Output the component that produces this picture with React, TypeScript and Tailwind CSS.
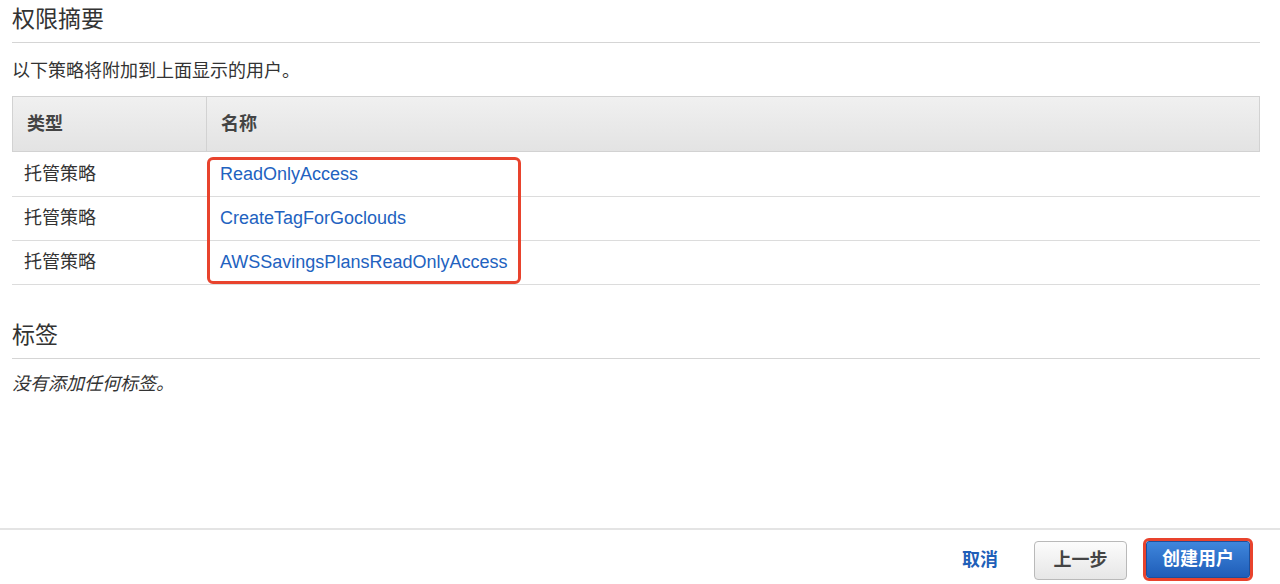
import React from "react";

const cjk = '"Liberation Sans", "Noto Sans CJK SC", sans-serif';

const rows = [
  { type: "托管策略", name: "ReadOnlyAccess", h: "h-[45px]" },
  { type: "托管策略", name: "CreateTagForGoclouds", h: "h-[44px]" },
  { type: "托管策略", name: "AWSSavingsPlansReadOnlyAccess", h: "h-[44px]" },
];

export default function App() {
  return (
    <div
      className="flex h-[584px] w-[1280px] flex-col bg-white text-[#333]"
      style={{ fontFamily: cjk }}
    >
      <div className="flex-1 pl-[12px] pr-[20px]">
        <h2 className="border-b border-[#d5d5d5] pb-[4px] text-[23px] font-normal leading-[38px] text-[#333]">
          权限摘要
        </h2>
        <p className="mt-[16px] text-[18px] leading-[24px]">以下策略将附加到上面显示的用户。</p>

        <div className="relative mt-[13px]">
          <div className="flex h-[56px] border border-[#d2d2d2] bg-gradient-to-b from-[#f0f0f0] to-[#e3e3e3] text-[18px] font-bold text-[#444]">
            <div className="flex w-[194px] items-center border-r border-[#d2d2d2] pl-[14px]">类型</div>
            <div className="flex flex-1 items-center pl-[14px]">名称</div>
          </div>
          {rows.map((r) => (
            <div
              key={r.name}
              className={`flex ${r.h} items-center border-b border-[#dcdcdc] text-[18px]`}
            >
              <div className="w-[195px] pl-[12px] text-[#333]">{r.type}</div>
              <div className="flex-1 pl-[13px] text-[#2262c0]">{r.name}</div>
            </div>
          ))}
          <div className="pointer-events-none absolute left-[195px] top-[61px] h-[127px] w-[314px] rounded-[6px] border-[3px] border-[#e8432d]" />
        </div>

        <h2 className="mt-[31px] border-b border-[#d5d5d5] pb-[4px] text-[23px] font-normal leading-[38px] text-[#333]">
          标签
        </h2>
        <p className="mt-[13px] text-[18px] italic leading-[24px]">没有添加任何标签。</p>
      </div>

      <div className="flex h-[56px] items-start justify-end border-t-2 border-[#e4e4e4] pr-[27px] pt-[8px]">
        <div className="flex items-center">
          <button className="mt-[1px] text-[18px] font-bold text-[#1f5fb8]">取消</button>
          <button className="ml-[36px] mt-[2px] h-[39px] w-[93px] rounded-[4px] border border-[#b9b9b9] bg-gradient-to-b from-[#fcfcfc] to-[#e6e6e6] text-[18px] font-bold text-[#444]">
            上一步
          </button>
          <div className="ml-[16px] rounded-[6px] border-[3px] border-[#e8432d]">
            <button className="h-[37px] w-[104px] rounded-[3px] border border-[#1d4f9c] bg-gradient-to-b from-[#3f86dc] to-[#1f5db8] text-[18px] font-bold text-white">
              创建用户
            </button>
          </div>
        </div>
      </div>
    </div>
  );
}
